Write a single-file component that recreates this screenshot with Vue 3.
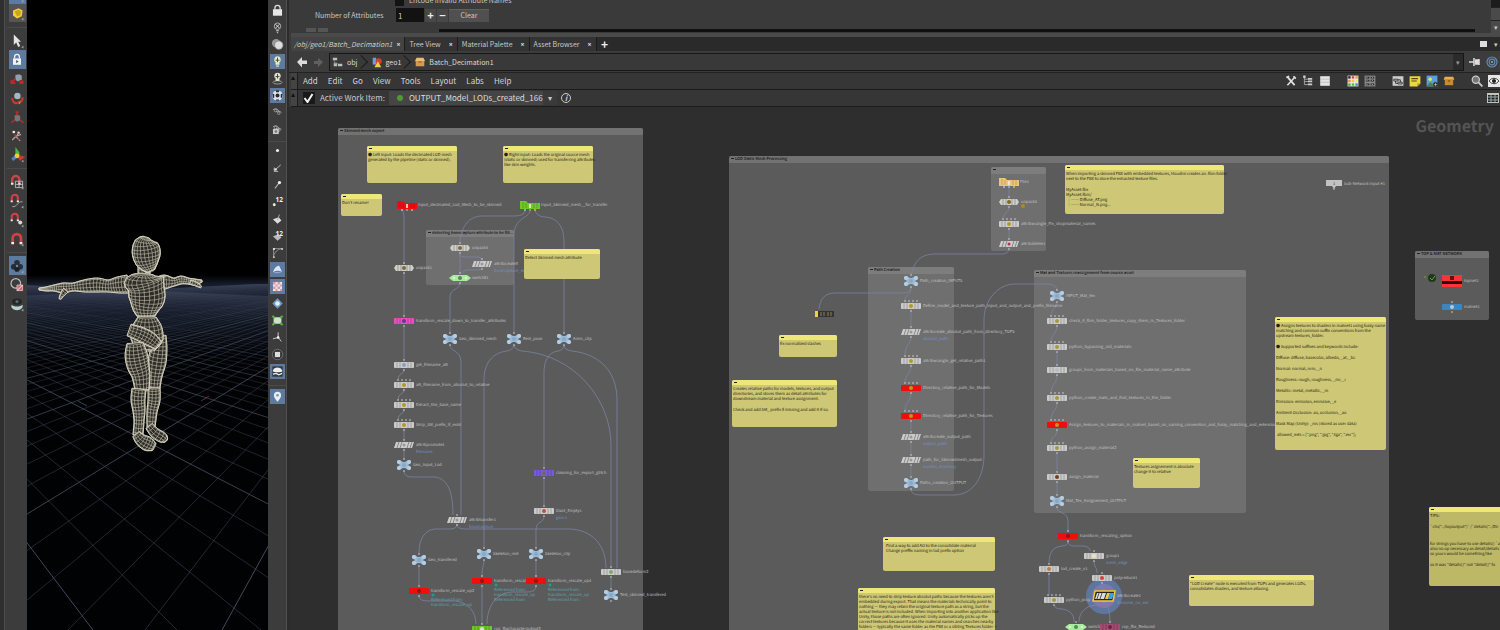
<script setup>
import { ref } from 'vue'

/* ---------- side tool strips ---------- */
const corner = '<path d="M18 16v3.500l-2.500-1.700z" fill="#aaa"/>'
const magnet = '<path d="M4 12V7a4.500 4.500 0 0 1 9 0v5" fill="none" stroke="#cf4247" stroke-width="3"/><path d="M4 11v2.500M13 11v2.500" stroke="#f0eee8" stroke-width="3"/>'
const leftTop = [
  { n: 'Snapshot', on: true, s: '<circle cx="10" cy="12" r="4" fill="#e8cf3a"/>' + corner },
  { n: 'Shelf', s: '<path d="M5 7l7-3 5 3-1 7-6 3-5-4z" fill="#f1cf2e"/><path d="M7 8l5-2 3 2-1 5-4 1z" fill="#c9a51a"/>' + corner },
]
const leftGroups = [
  [
    { n: 'Select', s: '<path d="M6 2v13l3-3 2.500 5.500 2.500-1.200L11.500 11H15z" fill="#e4e4e4"/>' + corner },
    { n: 'Secure selection', on: true, s: '<path d="M5 8h10v8H5z" fill="#eef2f6"/><path d="M7 8V6a3 3 0 0 1 6 0v2" stroke="#eef2f6" stroke-width="1.600" fill="none"/><path d="M9 10l3 2-3 2z" fill="#456"/>' },
    { n: 'Move', s: '<path d="M8 5l5-1 3 2v5l-5 2-3-2z" fill="#8fa0ae"/><path d="M8 10l-5 5M13 12l4 3M3 11v4h5M13 15h4v-3" stroke="#c0262a" stroke-width="2.400" fill="none"/>' },
    { n: 'Rotate', s: '<circle cx="10.500" cy="7.500" r="4" fill="#a7b5c2"/><path d="M4 10c0 6 4 7 7 6M17 9c0 4-2 6-5 6" stroke="#cb3a2a" stroke-width="2.600" fill="none"/><path d="M12 14l3 2-3 2z" fill="#e58a2c"/>' },
    { n: 'Scale', s: '<path d="M7 8l4-1 3 2v5l-4 2-3-2z" fill="#71777b"/><path d="M10 8V3M8 4h4M7 14l-4 3M14 14l4 3" stroke="#b9292c" stroke-width="2.200" fill="none"/>' },
    { n: 'Pose', s: '<circle cx="6" cy="5" r="1.700" fill="#eee"/><circle cx="12" cy="6" r="1.500" fill="#ddd"/><path d="M12 6l-3 5 5 5M9 10l-5 5M10 10l5-2" stroke="#b9a3a0" stroke-width="1.500" fill="none"/><path d="M7 8l2 3M11 13l2 2" stroke="#c33" stroke-width="1.500"/>' },
    { n: 'Handles', s: '<path d="M9 9V3l3 4v3z" fill="#4fb543" stroke="#4fb543" stroke-width="2"/><path d="M11 11l6 2-3 2z" stroke="#ce3a33" stroke-width="3" fill="none"/><path d="M9 12l-5 4" stroke="#4b86c4" stroke-width="4"/><circle cx="10" cy="11" r="3" fill="#e7cf3d"/>' + corner },
  ],
  [
    { n: 'Snap to grid', s: magnet + '<path d="M8 9h9v8H8zM12.500 9v8M8 13h9" fill="none" stroke="#ccc"/>' + corner },
    { n: 'Snap to primitive', s: '<g transform="scale(.850)">' + magnet + '</g><path d="M4 17c7 1 6-7 13-6" stroke="#bbb" fill="none"/>' + corner },
    { n: 'Snap to point', s: '<g transform="scale(.850)">' + magnet + '</g><circle cx="14" cy="13" r="2.500" fill="#d8d8d8"/>' + corner },
    { n: 'Multi snap', s: '<g transform="translate(0,1) scale(1.150)">' + magnet + '</g>' + corner },
  ],
  [
    { n: 'Render region', on: true, s: '<circle cx="10" cy="6" r="3.500" fill="#2a3038"/><circle cx="6" cy="11" r="3.500" fill="#252b33"/><circle cx="14" cy="11" r="3.500" fill="#2a3038"/><circle cx="10" cy="14" r="3.200" fill="#1c2129"/><circle cx="10" cy="10" r="1.500" fill="#77869a"/>' + corner },
    { n: 'Inspect', s: '<circle cx="8.500" cy="8" r="6" fill="none" stroke="#bdbdbd" stroke-width="1.500"/><path d="M10 10h7v7h-7z" fill="#c96a74" stroke="#e8c3c6"/><path d="M10 17l7-7" stroke="#fff"/>' },
    { n: 'Flipbook', s: '<ellipse cx="10" cy="7" rx="6" ry="4" fill="#22262a"/><circle cx="10" cy="7" r="2" fill="#5d666e"/><path d="M3 11c3 3 11 3 14 0v3c-3 5-11 5-14 0z" fill="#b8d2d4"/>' + corner },
  ],
]
const dot = '<circle cx="10" cy="10" r="2.400" fill="#eee"/>'
const eyes = '<path d="M3 6c4-3 7-2 9 2M8 9c3-2 6-1 8 1" stroke="#aaa" fill="none" stroke-width="1.400"/><circle cx="7" cy="7" r="2" fill="none" stroke="#bbb"/><circle cx="12" cy="11" r="2" fill="none" stroke="#bbb"/>'
const rightGroups = [
  [
    { n: 'Lock camera', s: '<path d="M3 8h14v10H3z" fill="#e6e6e6"/><path d="M6 9V6a4 4 0 0 1 8 0v3" stroke="#ddd" stroke-width="2" fill="none"/>' },
    { n: 'No lighting', s: '<circle cx="10" cy="8" r="5" fill="none" stroke="#bbb" stroke-width="1.300"/><path d="M7 5l6 6M13 5l-6 6M8 15h4M9 18h2" stroke="#ddd" stroke-width="1.500"/>' },
    { n: 'Shading', s: '<circle cx="8" cy="8" r="6.500" fill="#999"/><circle cx="12" cy="11" r="6.500" fill="#dedede" stroke="#777"/>' },
    { n: 'Headlight', on: true, s: '<path d="M10 2a5 5 0 0 1 3 9v4H7v-4a5 5 0 0 1 3-9z" fill="#e6ecc3"/><path d="M10 4v7M7 8h6" stroke="#454d3c" stroke-width="1.500"/><path d="M8 17h4" stroke="#e8e8d0" stroke-width="2"/>' },
    { n: 'Normal lighting', s: '<path d="M10 1a5 5 0 0 1 3 9v4H7v-4a5 5 0 0 1 3-9z" fill="#e3e6ce"/><path d="M10 3v7M7 7h6" stroke="#444" stroke-width="1.500"/><ellipse cx="10" cy="16" rx="7" ry="2.500" fill="none" stroke="#ccc"/>' },
    { n: 'Materials', on: true, s: '<circle cx="10" cy="10" r="8" fill="#e0e3e8"/><circle cx="10" cy="10" r="3" fill="#252b35"/><path d="M2 7l3 1v5l-2 1zM18 7l-3 1v5l2 1zM7 2h6l-1 3H8zM7 18h6l-1-2H8z" fill="#252b35"/>' },
    { n: 'Visibility', s: eyes },
    { n: 'Ghosting', s: eyes + '<path d="M3 9h9v8H3z" fill="#c8c8c8"/><circle cx="7.500" cy="13" r="2" fill="#777"/>' },
  ],
  [
    { n: 'Points', s: dot },
    { n: 'Point normals', s: '<path d="M7 13l8-7M5 10v6h6" stroke="#bbb" stroke-width="1.500" fill="none"/><circle cx="7" cy="13" r="2" fill="#ddd"/>' },
    { n: 'Point trails', s: '<path d="M6 16l7-9" stroke="#bbb" stroke-width="1.600"/><circle cx="13" cy="7" r="2.500" fill="#eee"/>' },
    { n: 'Point numbers', num: '12', s: '<circle cx="5" cy="15" r="2.200" fill="#eee"/>' },
    { n: 'Primitive normals', s: '<path d="M3 11l9-3 4 5-6 5z" fill="#ddd"/><path d="M10 12l3-8" stroke="#aaa" stroke-width="1.500"/>' },
    { n: 'Primitive numbers', num: '12', s: '<path d="M3 11l9-3 4 5-6 5z" fill="#bbb"/>' },
    { n: 'Hulls', s: '<path d="M4 18V4h14M4 15c2-6 6-10 12-11" stroke="#999" fill="none" stroke-width="1.300"/><path d="M3 3h3v3H3zM16 3h2v3h-2zM3 16h3v2H3z" fill="#ddd"/>' },
    { n: 'Profiles', on: true, s: '<path d="M3 14c3-8 8-11 10-9l4 9c-5-3-9-2-14 0z" fill="#dbe8f2"/><path d="M3 14c5 3 9 2 14 0" fill="#8ba8c4"/>' },
    { n: 'Textures', on: true, s: '<path d="M3 3h14v14H3z" fill="#e9e4e8"/><path d="M3 3h4v4H3zM10 3h4v4h-4zM7 7h3v3H7zM14 7h3v3h-3zM3 10h4v4H3zM10 10h4v4h-4zM7 14h3v3H7zM14 14h3v3h-3z" fill="#d79c9c"/>' },
    { n: 'Overlay', s: '<path d="M10 2l8 8-8 8-8-8z" fill="#6e9cc8"/><circle cx="10" cy="10" r="3.500" fill="#e8f0f4"/>' },
    { n: 'Bounds', s: '<path d="M4 5h12v10H4z" fill="#cfe0cc"/><path d="M2 3l4 3M18 3l-4 3M2 17l4-3M18 17l-4-3" stroke="#5bb044" stroke-width="3"/>' },
    { n: 'Origin axis', s: '<path d="M11 10V2M11 10l-8 2M11 10l5 6" stroke="#ccc" stroke-width="1.500"/><circle cx="11" cy="10" r="2" fill="#fff"/>' },
    { n: 'Object icons', s: '<circle cx="10" cy="10" r="8" fill="#333" stroke="#777" stroke-width="1.300"/><path d="M6 6h8v8H6z" fill="#ddd"/>' },
    { n: 'Background', on: true, s: '<path d="M2 2h16v16H2z" fill="#2f3a46"/><path d="M3 8c2-3 4-4 7-4s5 1 7 4-4 3-7 3-8 0-7-3z" fill="#eee"/><path d="M3 14l5-1 4 2 5-2" stroke="#eee" stroke-width="2" fill="none"/>' },
  ],
  [{ n: 'Display options', on: true, s: '<path d="M10 18C6 13 4.500 11 4.500 8a5.500 5.500 0 0 1 11 0c0 3-1.500 5-5.500 10z" fill="#e9eef3"/><circle cx="10" cy="8" r="2" fill="#7c93ab"/>' }],
]

/* ---------- 3D viewport ---------- */
const floor = []
for (let k = -6; k < 90; k++) {
  const o = k % 5 === 0 ? 0.8 : 0.45
  const far = Math.max(0.25, 1 - Math.max(0, k) / 40)
  floor.push({ d: `M-175 276L${93 + 84 * k} 630`, o: o * far })
  floor.push({ d: `M417 276L${222 - 77 * k} 630`, o: o * far })
}
const limb = (pts, rings, cols) => {
  const at = (t) => {
    const f = Math.min(t * (pts.length - 1), pts.length - 1.001)
    const i = Math.floor(f), u = f - i
    const p = (j) => pts[Math.max(0, Math.min(pts.length - 1, j))]
    return [0, 1, 2].map((c) => {
      const a = p(i - 1)[c], b = p(i)[c], d = p(i + 1)[c], e = p(i + 2)[c]
      return 0.5 * (2 * b + (d - a) * u + (2 * a - 5 * b + 4 * d - e) * u * u + (3 * b - a - 3 * d + e) * u * u * u)
    })
  }
  const rows = []
  for (let i = 0; i <= rings; i++) {
    const t = i / rings, [x, y, r] = at(t)
    const [x1, y1] = at(Math.max(0, t - 0.04)), [x2, y2] = at(Math.min(1, t + 0.04))
    const l = Math.hypot(x2 - x1, y2 - y1) || 1
    const tx = (x2 - x1) / l, ty = (y2 - y1) / l
    const row = []
    for (let j = 0; j <= cols; j++) {
      const a = (j / cols - 0.5) * Math.PI, s = Math.sin(a) * r, b = Math.cos(a) * r * 0.22
      row.push((x - ty * s + tx * b).toFixed(1) + ' ' + (y + tx * s + ty * b).toFixed(1))
    }
    rows.push(row)
  }
  let d = rows.map((r) => 'M' + r.join('L')).join('')
  for (let j = 0; j <= cols; j++) d += 'M' + rows.map((r) => r[j]).join('L')
  const edge = [...rows.map((r) => r[0]), ...rows.map((r) => r[cols]).reverse()]
  return { d, edge: 'M' + edge.join('L') + 'Z' }
}
const body = [
  limb([[128, 284, 9], [118, 285, 8], [108, 286, 6], [97, 285, 7], [84, 286, 6], [73, 287, 4], [63, 288, 5], [54, 288, 3], [46, 289, 2], [39, 289, 1]], 34, 5),
  limb([[66, 290, 3], [62, 295, 2], [60, 299, 1]], 5, 3),
  limb([[158, 283, 6], [165, 282, 7], [174, 282, 4], [181, 280, 4], [188, 281, 3], [195, 282, 3], [202, 281, 1]], 18, 5),
  limb([[190, 282, 2], [196, 284, 2], [201, 287, 1]], 5, 3),
  limb([[144, 264, 6], [144, 274, 6]], 4, 5),
  limb([[146, 237, 3], [145, 242, 11], [146, 250, 14], [147, 259, 13], [149, 266, 9], [151, 271, 4]], 12, 11),
  limb([[144, 274, 8], [144, 279, 20], [146, 287, 18], [147, 298, 18], [146, 308, 14], [146, 316, 9]], 14, 11),
  limb([[160, 335, 6], [159, 348, 8], [157, 362, 9], [155, 376, 7], [154, 388, 6]], 15, 6),
  limb([[154, 388, 6], [154, 400, 6], [152, 412, 5], [151, 428, 4]], 12, 5),
  limb([[149, 426, 4], [155, 433, 5], [163, 438, 5], [166, 441, 2]], 7, 5),
  limb([[147, 317, 9], [147, 325, 14], [147, 334, 16], [147, 342, 15], [147, 350, 8]], 9, 9),
  limb([[129, 330, 6], [140, 334, 7], [150, 339, 7], [158, 345, 5]], 10, 6),
  limb([[135, 343, 8], [136, 354, 11], [138, 365, 11], [141, 376, 9], [142, 390, 7]], 14, 7),
  limb([[139, 389, 7], [138, 400, 7], [139, 411, 6], [139, 422, 5], [138, 435, 5]], 13, 6),
  limb([[136, 434, 4], [141, 440, 6], [148, 444, 7], [154, 447, 4]], 8, 6),
]

/* ---------- network editor ---------- */
const tabs = [
  { t: '/obj/geo1/Batch_Decimation1', on: true },
  { t: 'Tree View' },
  { t: 'Material Palette' },
  { t: 'Asset Browser' },
]
const menus = ['Add', 'Edit', 'Go', 'View', 'Tools', 'Layout', 'Labs', 'Help']
const sq = (x, y, c) => `<path d="M${x} ${y}h4v4h-4z" fill="${c}"/>`
const tools = [
  [
    { n: 'Operator tools', s: '<path d="M4 3l12 14" stroke="#e2e2e2" stroke-width="3"/><path d="M17 3L4 17" stroke="#e2e2e2" stroke-width="2.500"/><path d="M2 4l5-2M14 2l4 4" stroke="#ddd" stroke-width="2.500"/>' },
    { n: 'Tree', s: '<path d="M4 2v14h7M4 7h7M4 11h7" stroke="#aaa" fill="none" stroke-width="1.500"/><path d="M10 5h7v3h-7zM10 9h7v3h-7zM10 14h7v3h-7zM2 1h4v4H2z" fill="#ccc"/>' },
    { n: 'List', s: '<path d="M2 2h16v16H2z" fill="#e4e4e4"/><path d="M2 7h16M2 12h16" stroke="#aaa"/>' },
  ],
  [
    { n: 'Palette', s: '<path d="M1 1h18v18H1z" fill="#e8e8e8"/>' + sq(2, 2, '#222') + sq(8, 2, '#d43') + sq(14, 2, '#e93') + sq(2, 8, '#e84') + sq(8, 8, '#ec3') + sq(14, 8, '#ee5') + sq(2, 14, '#4a4') + sq(8, 14, '#5b5') + sq(14, 14, '#48c') },
    { n: 'Shapes', s: '<path d="M1 1h18v18H1z" fill="#8a8a8a"/><path d="M3 3h6v3H3zM11 3h6v3h-6zM3 8h6v3H3zM11 8h6v3h-6zM3 14h6v3H3zM11 14h6v3h-6z" fill="#2b2b2b"/><path d="M4 4h2v1H4zM13 4h2v1h-2zM4 9h2v1H4zM13 9h2v1h-2zM4 15h2v1H4zM13 15h2v1h-2z" fill="#eee"/>' },
  ],
  [
    { n: 'Network box', s: '<path d="M1 2h18v16H1z" fill="#ccc"/><path d="M3 7h7v3H3zM10 12h7v3h-7zM6 10v4h4M10 8h4v4" fill="none" stroke="#333" stroke-width="1.500"/>' },
    { n: 'Sticky note', s: '<path d="M1 2h18v12l-5 5H1z" fill="#ecd83c"/><path d="M4 6h11M4 10h9" stroke="#554a10" stroke-width="2"/><path d="M14 19v-5h5z" fill="#a8951f"/>' },
    { n: 'Background image', s: '<path d="M1 1h18v18H1z" fill="#5ba0d8"/><circle cx="7" cy="7" r="3" fill="#e8e05a"/><path d="M1 18l6-6 4 3 4-5 4 5v4H1z" fill="#4d7e58"/><circle cx="16" cy="16" r="4" fill="#222"/><path d="M16 13v6M13 16h6" stroke="#ddd"/>' },
    { n: 'Asset', s: '<path d="M3 8h14v9H3z" fill="#c98a35"/><path d="M3 3h14l2 5H1z" fill="#e8ad55"/><path d="M8 9h4v2H8z" fill="#7a4d17"/>' },
  ],
  [
    { n: 'Find', s: '<circle cx="8" cy="8" r="6" fill="#777" stroke="#ccc" stroke-width="2"/><path d="M12 12l7 7" stroke="#ccc" stroke-width="3"/>' },
    { n: 'Display', s: '<path d="M0 0h20v20H0z" fill="#e6e6e6"/><path d="M2 10c4-6 12-6 16 0-4 6-12 6-16 0z" fill="#fff" stroke="#222" stroke-width="1.500"/><circle cx="10" cy="10" r="3.500" fill="#222"/>' },
  ],
]
const workOn = ref(true)
const count = ref('1')
const work = ref('OUTPUT_Model_LODs_created_166')

const pan = { x: 289, y: 107 }
const box = (b) => ({ left: b[0] - pan.x + 'px', top: b[1] - pan.y + 'px', width: b[2] + 'px', height: b[3] + 'px' })

const boxes = [
  { r: [338, 128, 305, 540], t: 'Skinned mesh export' },
  { r: [729, 156, 660, 520], t: 'LOD Static Mesh Processing' },
  { r: [426, 230, 88, 55], t: 'detecting bonecapture attribute to be filt...', in: true },
  { r: [991, 167, 55, 84], t: '', in: true },
  { r: [868, 267, 86, 224], t: 'Path Creation', in: true },
  { r: [1034, 270, 212, 243], t: 'Mat and Textures reassignment from source asset', in: true },
  { r: [1415, 251, 74, 69], t: 'TOP & MAT NETWORK' },
]

const notes = [
  { r: [367, 146, 90, 37], t: ['● Left input: Loads the decimated LOD mesh', 'generated by the pipeline (static or skinned).'] },
  { r: [503, 146, 90, 37], t: ['● Right input: Loads the original source mesh', '(static or skinned) used for transferring attributes', 'like skin weights.'] },
  { r: [341, 194, 41, 22], t: ["Don't rename!"] },
  { r: [524, 249, 76, 30], t: ['Detect Skinned mesh attribute'] },
  { r: [779, 335, 58, 22], t: ['fix normalized slashes'] },
  { r: [732, 380, 105, 47], t: ['Creates relative paths for models, textures, and output', 'directories, and stores them as detail attributes for', 'downstream material and texture assignment.', '', 'Check and add SM_ prefix if missing and add it if so.'] },
  { r: [883, 537, 112, 34], pad: true, t: ['Find a way to add AO to the consolidate material', 'Change preffix naming in lod prefix option'] },
  { r: [858, 588, 137, 60], t: ["there's no need to strip texture absolut paths because the textures aren't", 'embedded during export. That means the materials technically point to', 'nothing — they may retain the original texture path as a string, but the', 'actual texture is not included. When importing into another application like', 'Unity, those paths are often ignored. Unity automatically picks up the', 'correct textures because it uses the material names and searches nearby', 'folders — typically the same folder as the FBX or a sibling Textures folder —'] },
  { r: [1065, 165, 159, 49], t: ['When importing a skinned FBX with embedded textures, Houdini creates an .fbm folder', 'next to the FBX to store the extracted texture files.', '', 'MyAsset.fbx', 'MyAsset.fbm/', ' ├── Diffuse_AT.png', ' ├── Normal_N.png...'] },
  { r: [1275, 317, 111, 133], t: ['● Assigns textures to shaders in matnet1 using fuzzy name', 'matching and common suffix conventions from the', 'upstream textures_folder.', '', '● Supported suffixes and keywords include:', '', 'Diffuse: diffuse, basecolor, albedo, _at, _bc', '', 'Normal: normal, nrm, _n', '', 'Roughness: rough, roughness, _mr, _r', '', 'Metallic: metal, metallic, _m', '', 'Emission: emission, emissive, _e', '', 'Ambient Occlusion: ao, occlusion, _ao', '', 'Mask Map (Unity): _ms (stored as user data)', '', ' allowed_exts = [".png", ".jpg", ".tga", ".exr"];'] },
  { r: [1133, 458, 67, 30], t: ['Textures asignement is absolute', 'change it to relative'] },
  { r: [1189, 575, 125, 31], t: ['"LOD Create" node is executed from TOPs and generates LODs,', 'consolidates shaders, and texture atlasing.'] },
  { r: [1429, 507, 90, 79], dim: true, t: ['TIPS:', '', '`chs("../topoutput")`/`details("../Dir', '', '', 'for strings you have to use details() `a', 'also no op necessary as detail/details', 'so yours would be something like', '', 'so it was "details()" not "detail()" fo'] },
]

const G = '#cbcbcb', R = '#f20d0d'
const nodes = [
  { x: 407, y: 205, k: 'flag', c: R, l: 'Input_decimated_Lod_Mesh_to_be_skinned' },
  { x: 530, y: 205, k: 'flag', c: '#6fc728', l: 'Input_Skinned_mesh__for_transfer' },
  { x: 404, y: 268, k: 'pill', i: '#7b6a45', l: 'unpack1' },
  { x: 460, y: 248, k: 'pill', i: '#7b6a45', l: 'unpack4' },
  { x: 482, y: 264, k: 'slant', l: 'attribcreate3', s: 'boneCapture_exists' },
  { x: 460, y: 278, k: 'switch', l: 'switch01' },
  { x: 404, y: 321, k: 'bar', c: '#ee4fc0', i: '#5a3a9a', l: 'transform_rescale_down_to_transfer_attributes' },
  { x: 450, y: 339, k: 'null', l: 'Geo_Skinned_mesh' },
  { x: 514, y: 339, k: 'null', l: 'Rest_pose' },
  { x: 564, y: 339, k: 'null', l: 'Anim_clip' },
  { x: 404, y: 365, k: 'bar', i: '#8a9bc4', l: 'get_filename_att' },
  { x: 404, y: 385, k: 'bar', m: 1, i: '#b59a20', l: 'att_filename_from_absolut_to_relative' },
  { x: 404, y: 405, k: 'bar', m: 1, i: '#b59a20', l: 'Extract_the_base_name' },
  { x: 404, y: 425, k: 'bar', m: 1, i: '#b59a20', l: 'Strip_SM_prefix_if_exist' },
  { x: 404, y: 445, k: 'slant', l: 'attribpromote1', s: 'filename' },
  { x: 404, y: 465, k: 'null', l: 'Geo_input_Lod' },
  { x: 544, y: 473, k: 'bar', c: '#7a5be0', i: '#6f6a55', l: 'cleaning_for_export_glitch' },
  { x: 544, y: 511, k: 'bar', i: '#c4503c', l: 'blast_Emptys', s: 'geo=1' },
  { x: 457, y: 520, k: 'slant', l: 'attribtransfer1', s: 'boneCapture' },
  { x: 419, y: 560, k: 'null', l: 'Geo_transfered' },
  { x: 484, y: 554, k: 'null', l: 'Skeleton_rest' },
  { x: 536, y: 554, k: 'null', l: 'Skeleton_clip' },
  { x: 419, y: 591, k: 'solid', c: R, l: 'transform_rescale_up2', q: ['Referenced from:', 'transform_rescale_up'] },
  { x: 482, y: 581, k: 'solid', c: R, l: 'transform_rescale_up3', q: ['Referenced from:', 'transform_rescale_up', 'Referenced from:'] },
  { x: 536, y: 581, k: 'solid', c: R, l: 'transform_rescale_up4', q: ['Referenced from:', 'transform_rescale_up', 'Referenced from:'] },
  { x: 611, y: 572, k: 'bar', i: '#79b060', l: 'bonedeform2' },
  { x: 611, y: 595, k: 'null', l: 'Test_skinned_transfered' },
  { x: 482, y: 629, k: 'bar', c: '#6fc728', i: '#ddd', l: 'rop_fbxcharacteroutput3' },

  { x: 1009, y: 182, k: 'flag', c: '#efc47a', l: 'File1' },
  { x: 1009, y: 202, k: 'pill', i: '#7b6a25', l: 'unpack5', w: 1 },
  { x: 1009, y: 224, k: 'bar', m: 1, i: '#b59a20', l: 'attribwrangle_Fix_shopmaterial_names' },
  { x: 1009, y: 244, k: 'slant', i: '#b8324e', l: 'attribdelete1' },
  { x: 911, y: 281, k: 'null', l: 'Path_creation_INPUTS' },
  { x: 911, y: 306, k: 'bar', m: 1, i: '#b59a20', l: 'Define_model_and_texture_path_input_and_output_and_prefix_filename' },
  { x: 911, y: 332, k: 'slant', l: 'attribcreate_absolut_path_from_directory_TOPS', s: 'absolut_path' },
  { x: 911, y: 361, k: 'bar', m: 1, i: '#b59a20', l: 'attribwrangle_get_relative_path1' },
  { x: 911, y: 388, k: 'solid', m: 1, c: R, i: '#b59a20', l: 'Directory_relative_path_for_Models' },
  { x: 911, y: 416, k: 'solid', m: 1, c: R, i: '#b59a20', l: 'Directory_relative_path_for_Textures' },
  { x: 911, y: 437, k: 'slant', l: 'attribcreate_output_path', s: 'output_path' },
  { x: 911, y: 460, k: 'slant', l: 'path_for_Skinnedmesh_output', s: 'models_directory' },
  { x: 911, y: 483, k: 'null', l: 'Paths_creation_OUTPUT' },
  { x: 824, y: 314, k: 'off', l: '' },
  { x: 1057, y: 296, k: 'null', l: 'INPUT_Mat_tex' },
  { x: 1057, y: 321, k: 'bar', m: 1, i: '#a29a40', l: 'check_if_fbm_folder_textures_copy_them_in_Textures_folder' },
  { x: 1057, y: 347, k: 'bar', m: 1, i: '#a29a40', l: 'python_bypassing_old_materials' },
  { x: 1057, y: 370, k: 'bar', i: '#bbb', l: 'groups_from_materials_based_on_fbx_material_name_attribute' },
  { x: 1057, y: 398, k: 'bar', m: 1, i: '#a29a40', l: 'python_create_mats_and_find_textures_in_the_folder' },
  { x: 1057, y: 425, k: 'solid', m: 1, c: R, i: '#b59a20', l: 'Assign_textures_to_materials_in_matnet_based_on_naming_convention_and_fuzzy_matching_and_extension' },
  { x: 1057, y: 448, k: 'bar', m: 1, i: '#a29a40', l: 'python_assign_material2' },
  { x: 1057, y: 477, k: 'bar', i: '#754021', l: 'assign_material' },
  { x: 1057, y: 501, k: 'null', l: 'Mat_Tex_Assignement_OUTPUT' },
  { x: 1068, y: 536, k: 'solid', c: R, l: 'transform_rescaling_option' },
  { x: 1094, y: 556, k: 'bar', i: '#efe3b5', l: 'group1', s: 'mesh_edge' },
  { x: 1049, y: 569, k: 'bar', i: '#c07a48', l: 'lod_create_v1' },
  { x: 1102, y: 578, k: 'bar', i: '#d8403c', l: 'polyreduce1' },
  { x: 1054, y: 600, k: 'bar', m: 1, i: '#a29a40', l: 'python_prop' },
  { x: 1104, y: 596, k: 'current', l: 'attribcreate1', s: 'fbxname_no_ext' },
  { x: 1076, y: 627, k: 'switch', l: 'switch1' },
  { x: 1110, y: 627, k: 'bar', c: '#a34d73', i: '#6b2444', l: 'rop_fbx_Reduced' },
  { x: 1334, y: 184, k: 'input', l: 'Sub-Network Input #1' },
  { x: 1452, y: 281, k: 'top', l: 'topnet1' },
  { x: 1452, y: 307, k: 'solid', c: '#3b86be', i: '#b9c9d8', l: 'matnet1' },
]
const lx = (n) => (n.k === 'null' ? 9 : n.k === 'input' ? 10 : n.k === 'current' ? 13 : n.k === 'flag' ? 11 : 12)

const wires = [
  'M402 210Q404 212 404 217V264M404 272V316M404 326V360M404 369Q404 373 401 374T398 380M404 389Q404 393 401 394T398 400M404 409Q404 413 401 414T398 420M404 429V440M404 449V459',
  'M525 211Q524 216 514 216H482C470 216 461 225 460 243',
  'M530 211C529 218 514 218 514 235V333M535 211Q538 217 545 217C560 218 564 230 564 242V333',
  'M460 252V273M460 255Q461 257 466 257H478Q482 257 482 260M482 268Q482 270 476 270H467Q463 270 463 273',
  'M460 283C460 290 450 288 450 297V333M450 345C450 352 461 350 461 362V515',
  'M514 345Q513 350 507 351C490 353 484 366 484 380V548M514 345Q515 350 522 351C575 355 611 400 611 445V568',
  'M564 345Q564 350 558 351C548 352 544 362 544 372V468M564 345Q564 350 572 351C600 354 617 372 617 400V568',
  'M404 471Q404 477 412 477H435C448 479 453 492 453 515',
  'M457 524Q457 529 450 529H435C424 530 419 540 419 553M457 524Q457 529 465 529H570C592 530 606 545 606 568',
  'M544 478V506M544 516C544 524 536 520 536 530V548M536 560V577M484 560C484 567 482 565 482 577M482 586V624M419 566V586',
  'M419 596Q419 601 428 601H455C468 602 476 612 476 624M536 586Q536 592 528 592H512C495 593 487 608 487 624M611 577V589',
  'M1009 186V198M1009 207C1009 213 1003 212 1003 219M1009 228V239M1009 248Q1009 254 1002 254H935C920 254 914 262 911 275',
  'M911 287Q911 293 903 293H835C824 293 820 300 819 309M911 287C911 296 905 294 905 301M911 310V327M911 337C911 345 905 343 905 356M911 366C911 374 905 374 905 383M911 393C911 402 905 401 905 411M911 421V432M911 441V455M911 465V477',
  'M911 489Q911 495 920 495H955C975 494 984 475 984 455V320C984 300 998 284 1015 284H1048Q1056 284 1057 290',
  'M1057 302C1057 309 1051 308 1051 316M1057 326C1057 334 1051 334 1051 342M1057 352V366M1057 375C1057 384 1051 384 1051 393M1057 403C1057 411 1051 411 1051 420M1057 430C1057 437 1051 436 1051 443M1057 453V472M1057 482V495M1057 507C1057 515 1068 510 1068 522V532',
  'M1068 541Q1068 546 1062 546C1053 547 1049 552 1049 564M1068 541Q1068 546 1074 546H1084Q1090 547 1090 551M1094 561C1094 568 1097 566 1097 573M1102 583V591M1049 574V595M1054 605Q1055 609 1062 609C1070 610 1074 614 1074 622M1104 602Q1104 605 1096 605C1084 606 1079 614 1079 622M1104 602Q1110 606 1110 622',
]
</script>

<template>
  <div class="app">
    <aside class="strip left" aria-label="Tools">
      <div class="group first">
        <button v-for="i in leftTop" :key="i.n" :class="['tool', { on: i.on }]" :aria-label="i.n"><svg viewBox="0 0 20 20" v-html="i.s"></svg></button>
      </div>
      <div v-for="(g, k) in leftGroups" :key="k" class="group">
        <button v-for="i in g" :key="i.n" :class="['tool', { on: i.on }]" :aria-label="i.n"><svg viewBox="0 0 20 20" v-html="i.s"></svg></button>
      </div>
    </aside>

    <svg class="viewport" viewBox="27 0 241 630" preserveAspectRatio="xMidYMin slice" role="img" aria-label="3D viewport">
      <defs>
        <linearGradient id="haze" x1="0" y1="276" x2="0" y2="360" gradientUnits="userSpaceOnUse">
          <stop offset="0" stop-color="#020305" /><stop offset="0.1" stop-color="#161c2a" />
          <stop offset="0.5" stop-color="#0c111b" /><stop offset="1" stop-color="#010204" />
        </linearGradient>
        <clipPath id="ground"><rect x="27" y="284" width="241" height="346" /></clipPath>
      </defs>
      <rect x="27" y="0" width="241" height="630" fill="#000" />
      <rect x="27" y="276" width="241" height="354" fill="url(#haze)" />
      <g clip-path="url(#ground)" fill="none" stroke="#515b70">
        <path v-for="(l, k) in floor" :key="k" :d="l.d" :stroke-opacity="l.o" />
      </g>
      <path d="M78 401l9 5" stroke="#3b5378" stroke-opacity=".8" />
      <path d="M201 401l8-5" stroke="#7b3440" stroke-opacity=".8" />
      <g v-for="(p, k) in body" :key="k">
        <path :d="p.edge" fill="#2d2c27" stroke="#cfcbb4" stroke-width="1" />
        <path :d="p.d" fill="none" stroke="#dedac3" stroke-width=".6" stroke-opacity=".85" />
      </g>
    </svg>

    <aside class="strip right" aria-label="Display tools">
      <div v-for="(g, k) in rightGroups" :key="k" class="group">
        <button v-for="i in g" :key="i.n" :class="['tool', { on: i.on }]" :aria-label="i.n"><svg viewBox="0 0 20 20"><g v-html="i.s"></g><text v-if="i.num" x="7" y="11" class="num">{{ i.num }}</text></svg></button>
      </div>
    </aside>

    <div class="splitter"></div>

    <main class="pane">
      <section class="params">
        <div class="prow cut"><input id="enc" type="checkbox" class="dark" /><label for="enc">Encode Invalid Attribute Names</label></div>
        <div class="prow">
          <label class="plabel" for="cnt">Number of Attributes</label>
          <input id="cnt" v-model="count" class="num-in" type="text" />
          <button class="sq" aria-label="Add attribute">+</button>
          <button class="sq" aria-label="Remove attribute">−</button>
          <button class="clear">Clear</button>
        </div>
        <div class="prow last"><i class="mini"></i><i class="mini"></i><i class="field"></i></div>
        <div class="scroll"><i></i><i>▾</i></div>
      </section>

      <nav class="tabs">
        <div v-for="t in tabs" :key="t.t" :class="['tab', { on: t.on }]"><a href="#">{{ t.t }}</a><button :aria-label="'Close ' + t.t">×</button></div>
        <button class="plus" aria-label="New tab">+</button>
        <span class="tab-end"><i></i>▾</span>
      </nav>

      <div class="pathbar">
        <svg class="arrows" viewBox="0 0 32 14"><path d="M5 7l5-5v3.500h5v3.500h-5v3.500z" fill="#dcdcdc" /><path d="M31 7l-5-4v3h-4v3h4v3z" fill="#606060" /></svg>
        <div class="path">
          <a href="#"><svg viewBox="0 0 14 14"><path d="M1 2h5v3H1zM7 9h5v3H7zM2 8h4v4H2z" fill="#bdc0c0" /><path d="M3 5v4h4" stroke="#888" fill="none" /></svg>obj</a><i class="chev"></i>
          <a href="#"><svg viewBox="0 0 14 14"><path d="M2 2h4v8H2z" fill="#6f9fd6" /><circle cx="9" cy="6" r="3.500" fill="#d3402f" /><path d="M8 6l4 7H4z" fill="#f0cf46" /></svg>geo1</a><i class="chev"></i>
          <a href="#"><svg viewBox="0 0 14 14"><path d="M2 6h10v6H2z" fill="#d59a4a" /><path d="M3 2h8l2 4H1z" fill="#edbb72" /><path d="M5 7h4" stroke="#7d5520" /></svg>Batch_Decimation1</a>
          <button class="drop" aria-label="Path history">▾</button>
        </div>
        <svg class="pin" viewBox="0 0 12 12"><path d="M0 6h5M5 2v8M6 4h4M6 8h4M10 3v6" stroke="#ddd" stroke-width="1.500" /><path d="M6 4h4v4H6z" fill="#ddd" /></svg>
        <svg class="pin" viewBox="0 0 12 12"><g fill="none" stroke="#6689b0" stroke-width="1.200"><circle cx="6" cy="6" r="5" /><circle cx="6" cy="6" r="2.800" /></g><circle cx="6" cy="6" r="1" fill="#8fb0d4" /></svg>
      </div>

      <div class="bar menubar">
        <span class="grip">▴</span>
        <button v-for="m in menus" :key="m">{{ m }}</button>
        <div class="tools">
          <div v-for="(g, k) in tools" :key="k" class="tg"><button v-for="i in g" :key="i.n" :aria-label="i.n"><svg viewBox="0 0 20 20" v-html="i.s"></svg></button></div>
        </div>
      </div>

      <div class="bar workbar">
        <span class="grip">▴</span>
        <label class="check"><input v-model="workOn" type="checkbox" /><svg viewBox="0 0 10 10"><path d="M1 5l3 4 5-8" fill="none" stroke="#f2f2f2" stroke-width="2" /></svg>Active Work Item:</label>
        <div class="combo"><i class="led"></i><select v-model="work" aria-label="Active work item"><option>OUTPUT_Model_LODs_created_166</option></select><i class="arr">▾</i></div>
        <button class="info" aria-label="Info">i</button>
        <svg class="table-ic" viewBox="0 0 12 12"><path d="M0 1h12v10H0z" fill="#bfc4b8" /><path d="M1 3h10v7H1z" fill="#222" /><path d="M1 5h10M1 8h10M4 3v7M8 3v7" stroke="#9aa" /></svg>
      </div>

      <section class="canvas" aria-label="Network">
        <div v-for="b in boxes" :key="b.t" :class="['netbox', { inner: b.in }]" :style="box(b.r)"><header>{{ b.t }}</header></div>

        <svg class="graph" width="1211" height="523" viewBox="289 107 1211 523">
          <circle cx="1104" cy="596" r="18" fill="#5f7db0" fill-opacity=".8" />
          <circle cx="1104" cy="596" r="12" fill="#8a78b0" fill-opacity=".8" />
          <path v-for="(w, k) in wires" :key="k" :d="w" class="wire" />
          <g v-for="(n, k) in nodes" :key="k" :transform="`translate(${n.x} ${n.y})`">
            <g v-if="n.k !== 'off' && n.k !== 'top'" fill="#d4d4d4">
              <template v-if="n.m"><circle v-for="d in [-6, -2, 2, 6]" :key="d" :cx="d" cy="-5" r=".8" /></template>
              <circle v-else-if="n.k !== 'flag' && n.k !== 'input'" :cy="n.k === 'null' ? -6 : -5" r=".8" />
              <circle :cy="n.k === 'null' ? 6 : 5" r=".8" />
            </g>
            <template v-if="n.k === 'null'">
              <path d="M-5-3L5 3M5-3L-5 3" stroke="#9dbad4" stroke-width="4" stroke-linecap="round" />
              <rect x="-3" y="-3" width="6" height="6" fill="#9dbad4" />
              <circle v-for="p in [[-5, -3], [5, -3], [-5, 3], [5, 3]]" :key="p.join()" :cx="p[0]" :cy="p[1]" r="2" fill="#b4cee4" />
              <circle r="2" fill="#86a9c9" />
            </template>
            <template v-else-if="n.k === 'slant'">
              <path d="M-8-3H10L8 3H-10z" :fill="G" /><path d="M-5-3l-2 6M-2-3l-2 6M5-3L3 3M8-3L6 3" stroke="#6b6b6b" stroke-width=".7" />
              <circle r="1.500" :fill="n.i || '#999'" />
            </template>
            <template v-else-if="n.k === 'pill'">
              <path d="M-8-3H8L10 0 8 3H-8L-10 0z" fill="#d0cfc8" /><path d="M-6-3v6M-3-3v6M3-3v6M6-3v6" stroke="#858585" stroke-width=".7" />
              <circle r="2" :fill="n.i" />
              <circle v-if="n.w" cx="14" cy="4" r="2" fill="#b08a1c" />
            </template>
            <template v-else-if="n.k === 'switch'">
              <path d="M-11 0L-7-3H7L11 0 7 3H-7z" fill="#a8ec9c" /><circle r="2" fill="#4f8a6b" /><circle cx="6" r="1" fill="#e4ffe0" /><circle cx="-6" r="1" fill="#e4ffe0" />
            </template>
            <template v-else-if="n.k === 'flag'">
              <path d="M-10-4H-4l2 2H10V4H-10z" :fill="n.c" /><path d="M-7-3v6M-4-2v5M4-2v5M7-2v5" stroke="#000" stroke-opacity=".25" stroke-width=".7" />
              <rect x="-1" y="-1" width="2" height="4" fill="#eee" fill-opacity=".8" />
              <circle cx="-5" cy="5" r=".9" fill="#9cf" /><circle cx="5" cy="5" r=".9" fill="#fb3" />
            </template>
            <template v-else-if="n.k === 'off'">
              <rect x="-6" y="-3" width="16" height="6" fill="#35352f" /><rect x="-9" y="-3" width="3" height="6" fill="#ead54a" /><path d="M-3-2v4M0-2v4M4-2v4M7-2v4" stroke="#8a835a" />
            </template>
            <template v-else-if="n.k === 'current'">
              <path d="M-9-5H11L9 5H-11z" fill="#242424" stroke="#f0cb3a" stroke-width="1.500" /><path d="M-7-3H2L0 3H-9z" fill="#ddd" /><path d="M3-3H6L4 3H1z" fill="#e6cf4c" /><path d="M6-3H10L8 3H4z" fill="#3ea2dc" /><path d="M-5-3l-2 6M-2-3l-2 6" stroke="#555" />
            </template>
            <template v-else-if="n.k === 'input'">
              <path d="M-8-4H8V2H2L0 5-2 2H-8z" fill="#c2c2c2" /><text y="1" text-anchor="middle" class="lab ink">1</text>
            </template>
            <template v-else-if="n.k === 'top'">
              <rect x="-10" y="-6" width="20" height="12" fill="#f33" /><rect x="-10" y="0" width="20" height="3" fill="#2a0f0f" /><rect x="-2" y="-5" width="4" height="4" fill="#611" />
              <circle cx="-20" cy="-3" r="4" fill="#1d3a16" /><path d="M-22-3l2 2 3-4" fill="none" stroke="#6f9164" /><circle cx="-27" cy="-4" r="1" fill="#7d8a2f" />
            </template>
            <template v-else>
              <rect x="-10" y="-3" width="20" height="6" rx="1" :fill="n.c || G" />
              <path v-if="n.k === 'bar'" d="M-7-3v6M-4-3v6M4-3v6M7-3v6" stroke="#000" stroke-opacity=".3" stroke-width=".7" />
              <circle r="2" :fill="n.i || '#8c1616'" />
            </template>
            <text :x="lx(n)" y="1" class="lab">{{ n.l }}</text>
            <text v-if="n.s" :x="lx(n)" y="8" class="lab sub">{{ n.s }}</text>
            <template v-if="n.q">
              <circle cx="14" cy="4" r="1.500" fill="#1aa08c" />
              <text v-for="(q, j) in n.q" :key="j" :x="lx(n)" :y="10 + j * 5" class="lab ref">{{ q }}</text>
            </template>
          </g>
        </svg>

        <article v-for="(s, k) in notes" :key="k" :class="['note', { dim: s.dim, pad: s.pad }]" :style="box(s.r)">
          <header></header>
          <p v-for="(t, j) in s.t" :key="j" :class="{ gap: !t }">{{ t }}</p>
        </article>
        <span class="mark">Geometry</span>
      </section>
    </main>
  </div>
</template>

<style>
html, body { margin: 0; background: #2b2b2b; overflow: hidden; }
</style>

<style scoped>
.app { display: grid; grid-template-columns: 27px minmax(0, 241px) 18px 3px minmax(0, 1fr); height: 100vh; overflow: hidden; background: #3a3a3a; color: #c8c8c8; font-family: "Noto Sans CJK SC", "Open Sans", sans-serif; font-size: 7px; line-height: 12px; }
button, input, select { font: inherit; color: inherit; margin: 0; padding: 0; border: 0; background: none; border-radius: 0; }
button { display: inline-flex; align-items: center; justify-content: center; }
a { color: inherit; text-decoration: none; }
svg { display: block; }

.strip { background: #3c3c3c; min-height: 0; overflow: hidden; }
.strip.left { border-left: 4px solid #2f2f2f; box-shadow: inset 1px 0 #4d4d4d; padding-left: 3px; }
.strip .group { display: flex; flex-direction: column; }
.left .group { padding: 3px 0 4px; border-top: 1px solid #4a4a4a; align-items: center; }
.left .tool { width: 17px; height: 19px; }
.left .first { border: 0; padding: 0 0 5px; margin-top: -14px; }
.left .first .tool { height: 18px; background: #555; }
.left .tool.on, .left .first .tool.on { background: #5d7ba0; }
.tool svg { width: 16px; height: 16px; }
.right { padding-top: 2px; }
.right .group { align-items: center; padding-bottom: 3px; border-bottom: 1px solid #4a4a4a; }
.right .group + .group { padding-bottom: 5px; }
.right .group:last-child { border: 0; padding-top: 2px; }
.right .tool { width: 15px; height: 17px; }
.right .tool svg { width: 13px; height: 13px; }
.right .tool.on { background: #5d7ba0; background-clip: padding-box; border: solid transparent; border-width: 1px 0; }
.num { font: bold 10px "Open Sans", sans-serif; fill: #eee; }
.viewport { width: 100%; height: 100%; background: #000; }
.splitter { background: #2c2c2c; box-shadow: inset 1px 0 #505050; }

.pane { display: flex; flex-direction: column; min-width: 0; min-height: 0; }
.params { position: relative; height: 33px; overflow: hidden; background: #3a3a3a; flex: none; }
.prow { display: flex; align-items: center; height: 16px; padding-left: 26px; }
.prow.cut { height: 8px; align-items: flex-end; padding-left: 106px; gap: 5px; margin-top: -1px; line-height: 12px; }
.prow.cut label { padding-bottom: 1px; }
.dark { appearance: none; width: 9px; height: 7px; background: #131313; align-self: flex-start; }
.plabel { width: 81px; }
.num-in { width: 28px; height: 14px; background: #121212; padding-left: 2px; box-sizing: border-box; font-size: 8px; }
.prow .sq { width: 11px; height: 13px; margin-left: 1px; background: #484848; font-size: 11px; font-weight: bold; color: #eee; }
.clear { width: 40px; height: 13px; margin-left: 1px; background: #505050; box-shadow: inset 0 1px #606060; }
.prow.last { height: 4px; margin-top: 5px; padding-left: 17px; gap: 2px; }
.mini { width: 10px; height: 4px; background: #555; }
.field { flex: 1; height: 3px; margin: 0 25px 0 109px; background: #101010; }
.scroll { position: absolute; right: 0; top: 0; width: 9px; height: 33px; background: #1c1c1c; display: flex; flex-direction: column; justify-content: flex-end; }
.scroll i { height: 12px; background: #4a4a4a; font-style: normal; text-align: center; border-top: 1px solid #222; }

.tabs { display: flex; height: 14px; flex: none; border-top: 4px solid #4a4a4a; margin-left: 2px; background: #2a2a2a; }
.tab { display: flex; align-items: center; justify-content: space-between; gap: 8px; padding: 0 4px; background: #333; border-right: 1px solid #1d1d1d; }
.tab button { font: bold 7px "Open Sans", sans-serif; color: #ddd; }
.tab.on { background: #434343; padding-left: 3px; gap: 4px; }
.tab.on a { font-style: italic; }
.plus { width: 16px; font-size: 12px; font-weight: bold; color: #eee; }
.tab-end { margin-left: auto; display: flex; align-items: center; gap: 7px; padding-right: 2px; }
.tab-end i { width: 7px; height: 6px; background: #ddd; }

.pathbar { display: flex; align-items: center; height: 21px; flex: none; background: #3c3c3c; padding: 0 2px 0 3px; gap: 5px; border-bottom: 1px solid #222; }
.arrows { width: 32px; height: 14px; flex: none; }
.path { display: flex; align-items: center; flex: 1; height: 16px; background: #393939; border: 1px solid #171717; min-width: 0; }
.path a { display: flex; align-items: center; gap: 3px; padding-left: 2px; color: #dcdcdc; }
.path a svg { width: 12px; height: 12px; }
.chev { width: 9px; height: 9px; margin: 0 3px 0 -2px; border: solid #1c1c1c; border-width: 1px 1px 0 0; transform: rotate(45deg); }
.drop { margin-left: auto; width: 10px; height: 16px; background: #2b2b2b; color: #999; }
.pin { width: 12px; height: 12px; flex: none; }

.bar { display: flex; align-items: center; height: 16px; flex: none; background: #363636; border-bottom: 1px solid #1c1c1c; margin-left: 2px; font-size: 8px; }
.menubar button { padding: 0 5px; color: #d4d4d4; }
.grip { width: 6px; height: 100%; border-right: 1px solid #1c1c1c; color: #111; line-height: 8px; background: #444; }
.tools { display: flex; margin-left: auto; gap: 15px; }
.tg { display: flex; gap: 4px; }
.tools .tg button { padding: 0; width: 13px; }
.tools svg { width: 12px; height: 12px; }
.check { display: flex; align-items: center; gap: 6px; padding-left: 5px; }
.check svg { position: relative; width: 11px; height: 10px; }
.check input { appearance: none; width: 12px; height: 12px; background: #191919; margin-right: -18px; }
.combo { display: flex; align-items: center; margin-left: 4px; background: #454545; height: 14px; }
.led { width: 6px; height: 6px; border-radius: 50%; background: #4f9a35; margin: 0 6px 0 8px; }
.combo select { appearance: none; width: 134px; color: #ddd; }
.arr { width: 14px; font-style: normal; text-align: center; background: #3a3a3a; line-height: 14px; }
.info { width: 10px; height: 10px; margin-left: 4px; box-sizing: border-box; border: 1px solid #ccc; border-radius: 50%; font-style: italic; font-weight: bold; }
.table-ic { width: 12px; height: 12px; margin-left: auto; margin-right: 1px; }

.canvas { position: relative; flex: 1; min-height: 0; overflow: hidden; background: #2e2e2e; text-rendering: geometricPrecision; }
.netbox { position: absolute; box-sizing: border-box; background: #5b5b5b; border-radius: 2px; }
.netbox header { height: 7px; padding-left: 6px; background: #727272; border-radius: 2px 2px 0 0; color: #141414; font-size: 4px; font-weight: 500; line-height: 6px; white-space: nowrap; position: relative; }
.netbox header::before, .note header::before { content: ""; position: absolute; left: 2px; top: 2px; width: 3px; height: 1px; background: #222; }
.netbox.inner { background: #6f6f6f; }
.netbox.inner header { background: #7d7d7d; }
.graph { position: absolute; left: 0; top: 0; }
.wire { fill: none; stroke: #7d86a6; stroke-width: 1; stroke-opacity: .75; }
.lab { font-size: 4px; fill: #c2c2c2; }
.lab.ink { fill: #222; }
.lab.sub { fill: #6f93c9; }
.lab.ref { fill: #5ba7ab; }
.note { position: absolute; box-sizing: border-box; background: #cdc776; border-radius: 2px; color: #232110; font-size: 4px; line-height: 5px; }
.note header { position: relative; height: 5px; margin-bottom: 2px; background: #eee777; border-radius: 2px 2px 0 0; }
.note p { margin: 0; padding-left: 1px; white-space: pre; height: 5px; }
.note.pad p { padding-left: 3px; }
.note p.gap { height: 6px; }
.note.dim { background: #bdb866; }
.mark { position: absolute; right: 6px; top: 7px; font-size: 16px; line-height: 22px; font-weight: bold; color: #545454; }
</style>
